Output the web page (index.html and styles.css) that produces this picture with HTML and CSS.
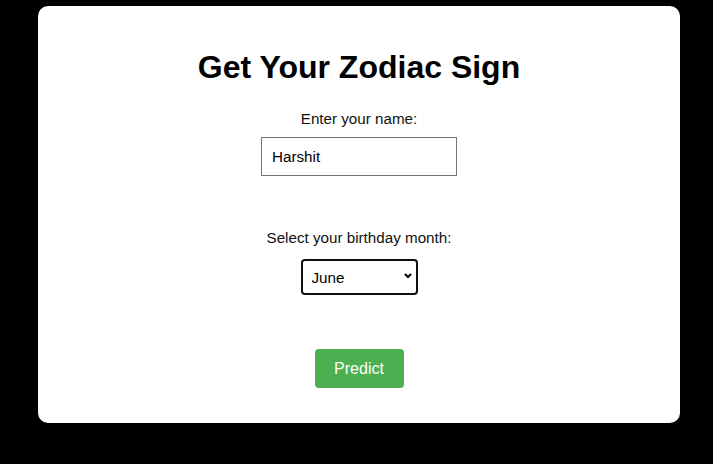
FILE: index.html
```html
<!DOCTYPE html>
<html lang="en">
<head>
    <meta charset="UTF-8">
    <meta name="viewport" content="width=device-width, initial-scale=1.0">
    <title>Get Your Zodiac Sign</title>
    <link rel="stylesheet" href="styles.css">
</head>
<body>
    <div class="card">
        <h1>Get Your Zodiac Sign</h1>

        <form class="zodiac-form">
            <label for="name">Enter your name:</label>
            <input type="text" id="name" value="Harshit">

            <label for="month" class="month-label">Select your birthday month:</label>
            <div class="select-wrap">
                <select id="month">
                    <option>January</option>
                    <option>February</option>
                    <option>March</option>
                    <option>April</option>
                    <option>May</option>
                    <option selected>June</option>
                    <option>July</option>
                    <option>August</option>
                    <option>September</option>
                    <option>October</option>
                    <option>November</option>
                    <option>December</option>
                </select>
                <!-- dropdown arrow -->
                <svg class="chevron" width="8" height="6" viewBox="0 0 8 6">
                    <path d="M1 1 L4 4 L7 1" fill="none" stroke="#000" stroke-width="2"/>
                </svg>
            </div>

            <button type="button" class="predict">Predict</button>
        </form>
    </div>
</body>
</html>
```

FILE: styles.css
```css
/* Page layout */
body {
    margin: 0;
    background-color: #000;
    font-family: "Liberation Sans", Arial, sans-serif;
    height: 464px;
}

.card {
    box-sizing: border-box;
    width: 642px;
    height: 417px;
    margin: 6px 0 0 38px;
    padding-top: 43px;
    background-color: #fff;
    border-radius: 10px;
    text-align: center;
}

h1 {
    margin: 0;
    font-size: 32px;
    line-height: 37px;
    font-weight: bold;
    color: #000;
}

.zodiac-form {
    display: flex;
    flex-direction: column;
    align-items: center;
    margin-top: 24px;
}

label {
    font-size: 15.2px;
    line-height: 18px;
    color: #111;
}

input[type="text"] {
    box-sizing: border-box;
    width: 196px;
    height: 39px;
    margin-top: 9px;
    padding: 0 10px;
    border: 1px solid #767676;
    font-family: inherit;
    font-size: 15.2px;
    color: #000;
    outline: none;
}

.month-label {
    margin-top: 53px;
}

.select-wrap {
    position: relative;
    margin-top: 12px;
}

select {
    box-sizing: border-box;
    width: 117px;
    height: 36px;
    padding: 0 9px;
    border: 2px solid #101010;
    border-radius: 4px;
    background-color: #fff;
    font-family: inherit;
    font-size: 15.2px;
    color: #000;
    appearance: none;
    -webkit-appearance: none;
    outline: none;
}

.chevron {
    position: absolute;
    right: 6px;
    top: 14px;
    pointer-events: none;
}

.predict {
    box-sizing: border-box;
    width: 89px;
    height: 39px;
    margin-top: 54px;
    border: none;
    border-radius: 4px;
    background-color: #4caf50;
    color: #fff;
    font-family: inherit;
    font-size: 16px;
    cursor: pointer;
}
```
